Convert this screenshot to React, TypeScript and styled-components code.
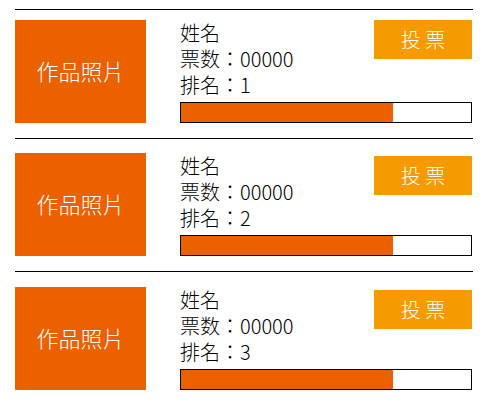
import React from "react";
import styled, { createGlobalStyle } from "styled-components";

const GlobalStyle = createGlobalStyle`
  * {
    box-sizing: border-box;
  }

  body {
    margin: 0;
    background: #ffffff;
    color: #000000;
    font-family: "Noto Sans CJK TC", "Noto Sans CJK SC", sans-serif;
    font-weight: 300;
  }
`;

const EntryList = styled.ul`
  list-style: none;
  margin: 0;
  padding: 9px 17px 0 15px;
`;

const Entry = styled.li`
  display: flex;
  gap: 34px;
  border-top: 1px solid #000000;
  padding: 14px 1px 15px 0;

  &:first-child {
    padding-top: 10px;
  }

  &:last-child {
    padding-top: 15px;
  }
`;

const Photo = styled.div`
  flex: none;
  display: flex;
  align-items: center;
  justify-content: center;
  width: 131px;
  height: 103px;
  padding-bottom: 4px;
  background: #eb6100;
  color: #ffffff;
  font-size: 22px;
  line-height: 26px;
`;

const Details = styled.div`
  flex: 1;
  min-width: 0;
  display: flex;
  flex-direction: column;
  justify-content: space-between;
`;

const Summary = styled.div`
  display: flex;
  justify-content: space-between;
  align-items: flex-start;
`;

const Facts = styled.div`
  font-size: 20px;
  line-height: 26px;
  white-space: nowrap;
`;

const Fact = styled.p`
  margin: 0;
`;

const VoteButton = styled.button`
  width: 98px;
  height: 39px;
  margin: 0;
  padding: 0;
  border: 0;
  border-radius: 0;
  background: #f59a00;
  color: #ffffff;
  font: inherit;
  font-size: 20px;
  line-height: 26px;
  cursor: pointer;

  ${Entry}:not(:first-child) & {
    margin-top: 3px;
  }
`;

const Track = styled.div`
  height: 21px;
  border: 1px solid #000000;
`;

const Fill = styled.div`
  height: 100%;
  background: #eb6100;
`;

interface Candidate {
  rank: number;
  name: string;
  votes: string;
  share: number;
}

const candidates: Candidate[] = [
  { rank: 1, name: "姓名", votes: "00000", share: 73 },
  { rank: 2, name: "姓名", votes: "00000", share: 73 },
  { rank: 3, name: "姓名", votes: "00000", share: 73 },
];

export default function App() {
  return (
    <>
      <GlobalStyle />
      <EntryList>
        {candidates.map(({ rank, name, votes, share }) => (
          <Entry key={rank}>
            <Photo>作品照片</Photo>
            <Details>
              <Summary>
                <Facts>
                  <Fact>{name}</Fact>
                  <Fact>票数：{votes}</Fact>
                  <Fact>排名：{rank}</Fact>
                </Facts>
                <VoteButton type="button">投 票</VoteButton>
              </Summary>
              <Track
                role="progressbar"
                aria-label="票数"
                aria-valuemin={0}
                aria-valuemax={100}
                aria-valuenow={share}
              >
                <Fill style={{ width: `${share}%` }} />
              </Track>
            </Details>
          </Entry>
        ))}
      </EntryList>
    </>
  );
}
